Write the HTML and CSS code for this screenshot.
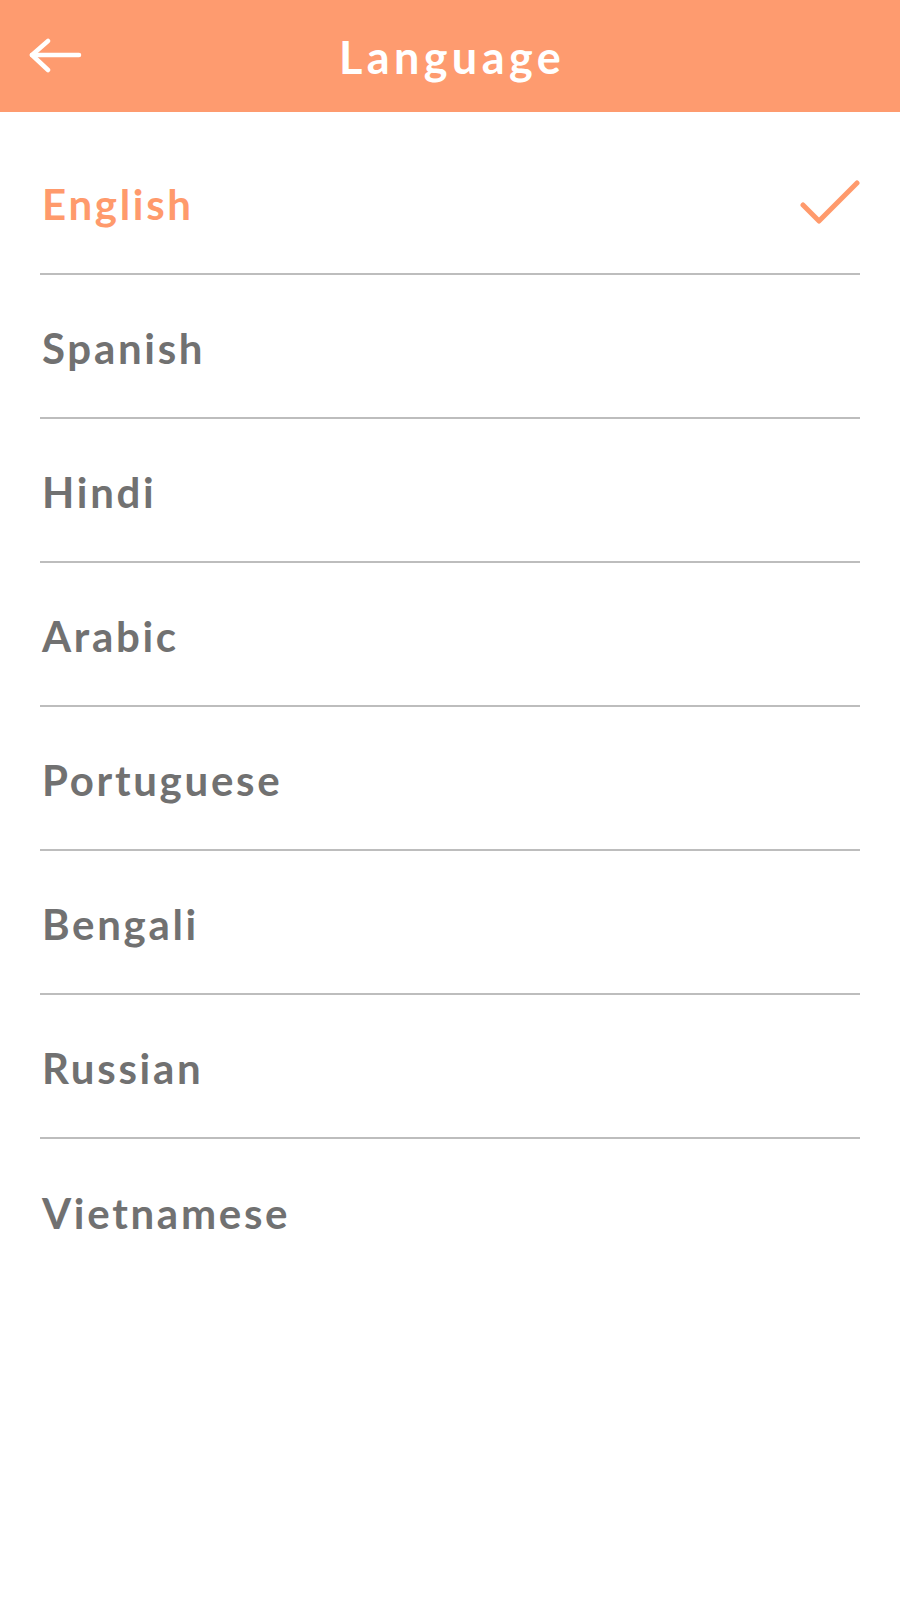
FILE: index.html
```html
<!DOCTYPE html>
<html lang="en">
<head>
<meta charset="utf-8">
<title>Language</title>
<link rel="stylesheet" href="styles.css">
</head>
<body>
<header class="appbar">
  <button class="back" aria-label="Back">
    <svg width="54" height="36" viewBox="0 0 54 36" fill="none" stroke="#ffffff" stroke-width="4.5" stroke-linecap="round" stroke-linejoin="round">
      <path d="M3 17 H50"/>
      <path d="M19 3 L3 17 L19 32"/>
    </svg>
  </button>
  <h1 class="title">Language</h1>
</header>
<ul class="list">
  <li class="item selected"><span>English</span>
    <svg class="check" width="64" height="48" viewBox="0 0 64 48" fill="none" stroke="#ff9a6c" stroke-width="5" stroke-linecap="round" stroke-linejoin="round">
      <path d="M4 29 L20 45 L58 7"/>
    </svg>
  </li>
  <li class="item"><span>Spanish</span></li>
  <li class="item"><span>Hindi</span></li>
  <li class="item"><span>Arabic</span></li>
  <li class="item"><span>Portuguese</span></li>
  <li class="item"><span>Bengali</span></li>
  <li class="item"><span>Russian</span></li>
  <li class="item"><span>Vietnamese</span></li>
</ul>
</body>
</html>
```

FILE: styles.css
```css
* { box-sizing: border-box; }
html, body {
  margin: 0;
  padding: 0;
  background: #ffffff;
  font-family: "Lato", "Noto Sans", sans-serif;
}
.appbar {
  height: 112px;
  background: #fe9b6f;
  display: flex;
  align-items: center;
  justify-content: center;
  position: relative;
}
.back {
  position: absolute;
  left: 29px;
  top: 38px;
  padding: 0;
  margin: 0;
  border: 0;
  background: none;
  display: flex;
}
.title {
  margin: 0;
  color: #ffffff;
  font-size: 45px;
  font-weight: 700;
  letter-spacing: 4.4px;
  line-height: 1;
  padding-top: 2px;
  padding-left: 4px;
}
.list {
  list-style: none;
  margin: 0;
  padding: 19px 40px 0 40px;
}
.item {
  height: 144px;
  border-bottom: 2px solid #bdbdbd;
  display: flex;
  align-items: center;
  justify-content: space-between;
  color: #717171;
  font-size: 42px;
  font-weight: 700;
  letter-spacing: 2.7px;
  padding-left: 2px;
  padding-top: 3px;
}
.item:last-child { border-bottom: 0; }
.item.selected { color: #ff9a6c; }
.check { margin-right: -3px; margin-top: -7px; }
```
